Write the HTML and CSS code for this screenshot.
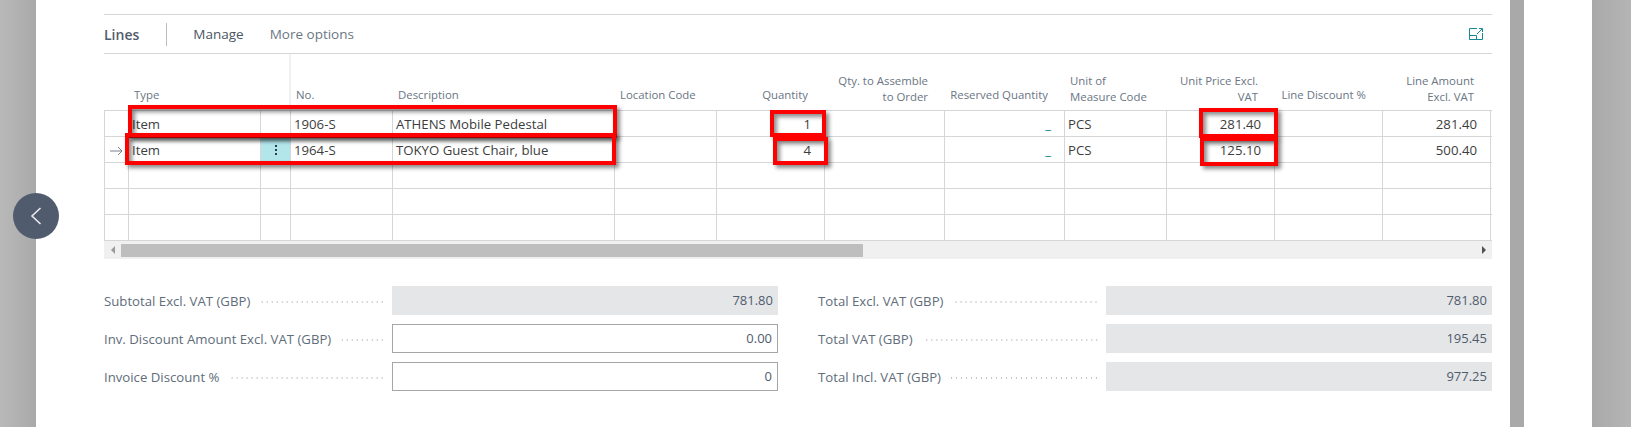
FILE: index.html
```html
<!DOCTYPE html>
<html lang="en">
<head>
    <meta charset="UTF-8">
    <title>Sales Invoice Lines</title>
    <link rel="stylesheet" href="styles.css">
</head>
<body>
    <div class="shell">
        <div class="side side-left"></div>
        <main class="panel">
            <section class="lines">
                <div class="bar">
                    <span class="bar-title">Lines</span>
                    <span class="bar-sep"></span>
                    <span class="bar-item">Manage</span>
                    <span class="bar-item bar-muted">More options</span>
                    <svg class="expand" width="14" height="12" viewBox="0 0 14 12" fill="none" stroke="#168a94">
                        <path d="M8 .5H.5v11h13V5"/>
                        <path d="M.5 7.500H7.500V11.500"/>
                        <path d="M8 6 13 1M10 .5h3.500V4"/>
                    </svg>
                </div>
                <div class="grid-wrap">
                    <table class="grid">
                        <colgroup>
                            <col class="c25"><col class="c132"><col class="c30"><col class="c102"><col class="c222">
                            <col class="c102"><col class="c108"><col class="c120"><col class="c120"><col class="c102">
                            <col class="c108"><col class="c108"><col class="c108"><col class="c1">
                        </colgroup>
                        <thead>
                            <tr>
                                <th></th>
                                <th class="one">Type</th>
                                <th class="freeze"></th>
                                <th class="one">No.</th>
                                <th class="one">Description</th>
                                <th class="one">Location Code</th>
                                <th class="one num">Quantity</th>
                                <th class="num">Qty. to Assemble<br>to Order</th>
                                <th class="one num">Reserved Quantity</th>
                                <th>Unit of<br>Measure Code</th>
                                <th class="num">Unit Price Excl.<br>VAT</th>
                                <th class="one num">Line Discount %</th>
                                <th class="num">Line Amount<br>Excl. VAT</th>
                                <th></th>
                            </tr>
                        </thead>
                        <tbody>
                            <tr>
                                <td></td><td>Item</td><td></td><td>1906-S</td><td>ATHENS Mobile Pedestal</td><td></td>
                                <td class="num">1</td><td></td><td class="num link">_</td><td>PCS</td>
                                <td class="num">281.40</td><td></td><td class="num">281.40</td><td></td>
                            </tr>
                            <tr>
                                <td class="cur">
                                    <svg width="13" height="10" viewBox="0 0 13 10" fill="none" stroke="#6a7583" stroke-width=".9">
                                        <path d="M0 5h12M8 1l4 4-4 4"/>
                                    </svg>
                                </td>
                                <td>Item</td>
                                <td class="dots"><span class="dot"></span><span class="dot"></span><span class="dot"></span></td>
                                <td>1964-S</td><td>TOKYO Guest Chair, blue</td><td></td>
                                <td class="num">4</td><td></td><td class="num link">_</td><td>PCS</td>
                                <td class="num">125.10</td><td></td><td class="num">500.40</td><td></td>
                            </tr>
                            <tr><td></td><td></td><td></td><td></td><td></td><td></td><td></td><td></td><td></td><td></td><td></td><td></td><td></td><td></td></tr>
                            <tr><td></td><td></td><td></td><td></td><td></td><td></td><td></td><td></td><td></td><td></td><td></td><td></td><td></td><td></td></tr>
                            <tr><td></td><td></td><td></td><td></td><td></td><td></td><td></td><td></td><td></td><td></td><td></td><td></td><td></td><td></td></tr>
                        </tbody>
                    </table>
                </div>
                <div class="scroll">
                    <span class="scroll-btn"><span class="tri tri-left"></span></span>
                    <span class="thumb"></span>
                    <span class="scroll-btn scroll-end"><span class="tri tri-right"></span></span>
                </div>

                <!-- red annotations from the screenshot -->
                <div class="mark mark-row1"></div>
                <div class="mark mark-row2"></div>
                <div class="mark mark-qty1"></div>
                <div class="mark mark-qty2"></div>
                <div class="mark mark-price1"></div>
                <div class="mark mark-price2"></div>
            </section>

            <section class="totals">
                <div class="field">
                    <span class="label">Subtotal Excl. VAT (GBP)</span><span class="leader"></span>
                    <span class="value">781.80</span>
                </div>
                <div class="field">
                    <span class="label">Total Excl. VAT (GBP)</span><span class="leader"></span>
                    <span class="value">781.80</span>
                </div>
                <div class="field">
                    <span class="label">Inv. Discount Amount Excl. VAT (GBP)</span><span class="leader"></span>
                    <span class="value input">0.00</span>
                </div>
                <div class="field">
                    <span class="label">Total VAT (GBP)</span><span class="leader"></span>
                    <span class="value">195.45</span>
                </div>
                <div class="field">
                    <span class="label">Invoice Discount %</span><span class="leader"></span>
                    <span class="value input">0</span>
                </div>
                <div class="field">
                    <span class="label">Total Incl. VAT (GBP)</span><span class="leader"></span>
                    <span class="value">977.25</span>
                </div>
            </section>
        </main>
        <div class="strip"></div>
        <div class="blank"></div>
        <div class="side side-right"></div>

        <div class="back">
            <svg width="12" height="18" viewBox="0 0 12 18" fill="none" stroke="#eef0f2" stroke-width="1.500">
                <path d="M10.500 1 2 9l8.500 8"/>
            </svg>
        </div>
    </div>
</body>
</html>
```

FILE: styles.css
```css
* {
    box-sizing: border-box;
}

body {
    margin: 0;
    background: #fff;
    color: #3d3d3d;
    font-family: "Open Sans", "Noto Sans", sans-serif;
    font-size: 13.200px;
    overflow: hidden;
}

.shell {
    position: relative;
    display: flex;
    height: 427px;
}

.side-left {
    width: 36px;
    background: linear-gradient(to right, #b9b9b9, #a9a9a9);
}

.side-right {
    width: 39px;
    background: linear-gradient(to right, #a9a9a9, #b5b5b5);
}

.panel {
    width: 1474px;
    padding: 14px 18px 0 68px;
    background: #fff;
}

.strip {
    width: 14px;
    background: #a9a9a9;
}

.blank {
    width: 68px;
}

.back {
    position: absolute;
    left: 13px;
    top: 193px;
    width: 46px;
    height: 46px;
    border-radius: 50%;
    background: #505c6d;
    display: flex;
    align-items: center;
    justify-content: center;
}

.lines {
    position: relative;
    border-top: 1px solid #d4d6da;
}

/* action bar */
.bar {
    display: flex;
    align-items: center;
    height: 39px;
    border-bottom: 1px solid #d4d6da;
}

.bar-title {
    font-size: 14px;
    font-weight: 600;
    color: #505c6d;
}

.bar-sep {
    width: 1px;
    height: 23px;
    margin: 0 26px 0 27px;
    background: #b9bdc3;
}

.bar-item {
    margin-right: 26px;
    font-size: 13.500px;
    color: #4a5563;
}

.bar-muted {
    color: #6b7785;
}

.expand {
    margin-left: auto;
    margin-right: 9px;
}

/* lines grid */
.grid {
    border-collapse: separate;
    border-spacing: 0;
    table-layout: fixed;
    width: 1388px;
}

.c25 { width: 25px; }
.c132 { width: 132px; }
.c30 { width: 30px; }
.c102 { width: 102px; }
.c222 { width: 222px; }
.c108 { width: 108px; }
.c120 { width: 120px; }
.c1 { width: 1px; }

.grid th {
    height: 56px;
    padding: 0 5px 5px;
    vertical-align: bottom;
    text-align: left;
    font-size: 11.400px;
    font-weight: 400;
    line-height: 16px;
    color: #6a7583;
    white-space: nowrap;
}

.grid th.one {
    padding-bottom: 7px;
}

.grid th.num {
    text-align: right;
    padding-right: 17px;
}

.grid th.freeze {
    border-right: 2px solid #f1f1f1;
}

.grid td {
    height: 26px;
    padding: 1px 2px 0 3px;
    border-top: 1px solid #d4d6da;
    border-right: 1px solid #d4d6da;
    white-space: nowrap;
    overflow: hidden;
}

.grid td:first-child {
    border-left: 1px solid #d4d6da;
}

.grid td:last-child {
    border-right: 0;
    padding: 0;
}

.grid tbody tr:last-child td {
    border-bottom: 1px solid #d4d6da;
    height: 27px;
}

.grid td.num {
    text-align: right;
    padding-right: 13px;
}

.grid td.link {
    color: #0a7f87;
}

.grid td.cur {
    padding: 2px 0 0 5px;
}

.grid td.dots {
    background: #b2e6eb;
    padding: 0;
    text-align: center;
}

.dot {
    display: block;
    width: 2px;
    height: 2px;
    margin: 2px auto;
    background: #2b3a55;
}

/* scrollbar */
.scroll {
    display: flex;
    align-items: center;
    height: 18px;
    background: #f0f0f0;
}

.scroll-btn {
    display: flex;
    align-items: center;
    justify-content: center;
    width: 17px;
    height: 100%;
}

.scroll-end {
    margin-left: auto;
}

.thumb {
    width: 742px;
    height: 13px;
    background: #bebebe;
}

.tri {
    width: 0;
    height: 0;
    border-top: 4px solid transparent;
    border-bottom: 4px solid transparent;
}

.tri-left {
    border-right: 4px solid #9a9a9a;
}

.tri-right {
    border-left: 4px solid #505050;
}

/* annotations, coordinates relative to .lines */
.mark {
    position: absolute;
    border: 4px solid #f00;
    box-shadow: 3px 3px 4px rgba(0, 0, 0, .45), inset 3px 3px 4px rgba(0, 0, 0, .45);
}

.mark-row1 { left: 24px; top: 90px; width: 489px; height: 33px; }
.mark-row2 { left: 21px; top: 118px; width: 491px; height: 32px; }
.mark-qty1 { left: 666px; top: 95px; width: 56px; height: 27px; }
.mark-qty2 { left: 669px; top: 122px; width: 55px; height: 28px; }
.mark-price1 { left: 1095px; top: 93px; width: 79px; height: 30px; }
.mark-price2 { left: 1096px; top: 122px; width: 78px; height: 29px; }

/* totals */
.totals {
    display: grid;
    grid-template-columns: 674px 674px;
    column-gap: 40px;
    row-gap: 9px;
    margin-top: 27px;
}

.field {
    display: flex;
    align-items: center;
    height: 29px;
}

.label {
    padding-top: 1px;
    font-size: 13.200px;
    color: #616d7a;
    white-space: nowrap;
}

.leader {
    flex: 1;
    height: 2px;
    margin: 3px 7px 0 10px;
    background: radial-gradient(circle, #c4c6ca 0.8px, transparent 1px) right / 5px 2px repeat-x;
}

.value {
    width: 386px;
    height: 29px;
    padding: 0 5px;
    background: #e5e6e8;
    color: #505c6d;
    font-size: 13px;
    line-height: 29px;
    text-align: right;
}

.value.input {
    background: #fff;
    border: 1px solid #a6a6a6;
    line-height: 27px;
}
```
